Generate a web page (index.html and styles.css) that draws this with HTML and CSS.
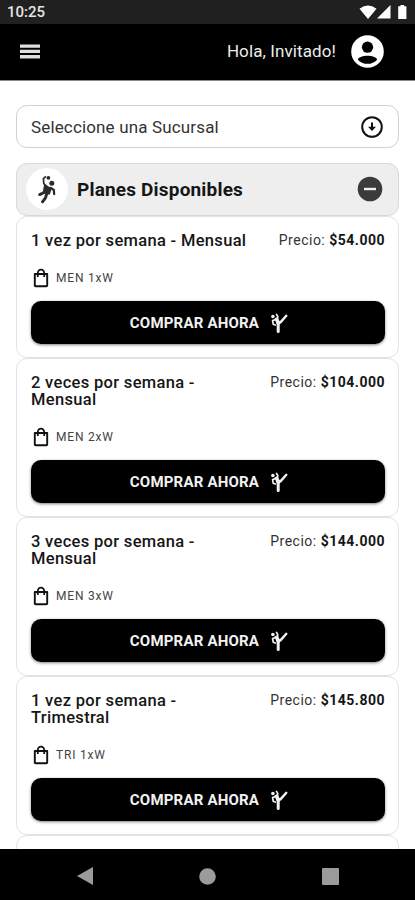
FILE: index.html
```html
<!DOCTYPE html>
<html lang="es">

<head>
  <meta charset="utf-8">
  <title>Planes Disponibles</title>
  <meta name="viewport" content="width=device-width, initial-scale=1">
  <link rel="stylesheet" href="styles.css">
</head>

<body>

  <!-- shared icons -->
  <svg class="sprite">
    <symbol id="icon-bag" viewBox="0 0 16 20">
      <path d="M1.8 6h12.4v11.4q0 .8-.8.8H2.6q-.8 0-.8-.8z" fill="none" stroke="currentColor" stroke-width="1.9" stroke-linejoin="round" />
      <path d="M4.8 9V5.2a3.2 3.6 0 0 1 6.4 0V9" fill="none" stroke="currentColor" stroke-width="1.8" />
    </symbol>
    <symbol id="icon-kick" viewBox="0 0 18 20">
      <circle cx="2.9" cy="3.5" r="1.8" fill="currentColor" />
      <path d="M4.5 5.5l3-1.5 2.5 5-.5 3-3-1z" fill="currentColor" />
      <g fill="none" stroke="currentColor" stroke-linecap="round" stroke-linejoin="round">
        <path d="M6.5 1.4l1.3 2.2-.5 2.4L2.6 7.6l.6 3.6 2.2.8" stroke-width="1.7" />
        <path d="M8.2 9.3l2 .3L16.3 2.8" stroke-width="2.4" />
        <path d="M8.2 9.5v9" stroke-width="3" />
      </g>
    </symbol>
  </svg>

  <div class="status-bar">
    <span>10:25</span>
    <svg width="50" height="17" viewBox="0 0 50 17" fill="#fff">
      <path d="M.5 4.8Q9 -1.8 17.5 4.8L9 15z" />
      <path d="M31.5 1v13.5H18z" />
      <path d="M41.5 1h3.6v1.3h2.3V15h-8.2V2.3h2.3z" />
    </svg>
  </div>

  <header class="navbar">
    <svg class="menu" width="20" height="15" viewBox="0 0 20 15" fill="#dce0dd">
      <path d="M0 .4h20v3.4H0zM0 5.7h20v3.4H0zM0 11h20v3.4H0z" />
    </svg>
    <span class="hello">Hola, Invitado!</span>
    <svg width="33" height="33" viewBox="0 0 33 33">
      <circle cx="16.5" cy="16.5" r="16.3" fill="#fff" />
      <circle cx="16.5" cy="12.2" r="5.6" />
      <path d="M6.8 24.4c2-5 17.4-5 19.4 0-4.6 5.9-14.8 5.9-19.4 0z" />
    </svg>
  </header>

  <main>

    <div class="select">
      <span>Seleccione una Sucursal</span>
      <svg width="22" height="22" viewBox="0 0 22 22">
        <circle cx="11" cy="11" r="9.8" fill="none" stroke="#111" stroke-width="2" />
        <path d="M10 6.5h2v4.3h3L11 15l-4-4.2h3z" fill="#111" />
      </svg>
    </div>

    <div class="plans-header">
      <div class="avatar">
        <svg width="18" height="29" viewBox="0 0 18 29" fill="#2b2b2b">
          <circle cx="10.4" cy="2.8" r="1.9" />
          <circle cx="13.8" cy="8.2" r="2.5" />
          <path d="M6 10l3.4.8 4.5 2.5-2.2 6.4-7-1.7z" />
          <g fill="none" stroke="#2b2b2b" stroke-linecap="round" stroke-linejoin="round">
            <path d="M7.4 1.8L5.4 3.7l.4 5 3.2 3" stroke-width="1.7" />
            <path d="M12.8 12.8l3 2.2.4 4.1" stroke-width="2.2" />
            <path d="M7 17l-5.3 2.6M8.8 18.5l-1.3 4.3-3 4" stroke-width="2.9" />
          </g>
        </svg>
      </div>
      <h1>Planes Disponibles</h1>
      <svg width="26" height="26" viewBox="0 0 26 26">
        <circle cx="13" cy="13" r="12.3" fill="#3b3b3d" />
        <path d="M7 13h12" stroke="#eee" stroke-width="2.4" />
      </svg>
    </div>

    <div class="card">
      <div class="card-top">
        <h2>1 vez por semana - Mensual</h2>
        <span class="price">Precio: <b>$54.000</b></span>
      </div>
      <div class="code"><svg><use href="#icon-bag" /></svg>MEN 1xW</div>
      <button>COMPRAR AHORA <svg><use href="#icon-kick" /></svg></button>
    </div>

    <div class="card">
      <div class="card-top">
        <h2>2 veces por semana - Mensual</h2>
        <span class="price">Precio: <b>$104.000</b></span>
      </div>
      <div class="code"><svg><use href="#icon-bag" /></svg>MEN 2xW</div>
      <button>COMPRAR AHORA <svg><use href="#icon-kick" /></svg></button>
    </div>

    <div class="card">
      <div class="card-top">
        <h2>3 veces por semana - Mensual</h2>
        <span class="price">Precio: <b>$144.000</b></span>
      </div>
      <div class="code"><svg><use href="#icon-bag" /></svg>MEN 3xW</div>
      <button>COMPRAR AHORA <svg><use href="#icon-kick" /></svg></button>
    </div>

    <div class="card">
      <div class="card-top">
        <h2>1 vez por semana - Trimestral</h2>
        <span class="price">Precio: <b>$145.800</b></span>
      </div>
      <div class="code"><svg><use href="#icon-bag" /></svg>TRI 1xW</div>
      <button>COMPRAR AHORA <svg><use href="#icon-kick" /></svg></button>
    </div>

    <div class="card"></div>

  </main>

  <footer class="system-nav">
    <svg width="16" height="18" viewBox="0 0 16 18"><path d="M0 9L16 0v18z" /></svg>
    <svg width="17" height="17" viewBox="0 0 17 17"><circle cx="8.5" cy="8.5" r="8.3" /></svg>
    <svg width="17" height="17" viewBox="0 0 17 17"><rect width="17" height="17" rx="1" /></svg>
  </footer>

</body>

</html>
```
FILE: styles.css
```css
/* ******************** global ******************* */

* {
  box-sizing: border-box;
}

html,
body {
  margin: 0;
  height: 100%;
}

body {
  display: flex;
  flex-direction: column;
  height: 900px;
  overflow: hidden;
  background-color: white;
  color: #161616;
  font-family: Roboto, sans-serif;
}

svg {
  display: block;
  flex: none;
}

.sprite {
  display: none;
}

/* ******************** top bars ******************* */

.status-bar {
  display: flex;
  justify-content: space-between;
  align-items: center;
  flex: none;
  height: 24px;
  padding: 0 6px 0 7px;
  background-color: #202020;
  color: #e4e4e4;
  font-size: 15px;
  font-weight: 500;
}

.navbar {
  display: flex;
  align-items: center;
  flex: none;
  height: 57px;
  padding: 0 31px 2px 20px;
  border-bottom: 1px solid #8c8c8c;
  background-color: black;
  color: #ececec;
}

.hello {
  margin: 0 15px 0 auto;
  font-size: 17px;
  letter-spacing: 0.1px;
}

/* ******************** plans ******************* */

main {
  flex: 1;
  min-height: 0;
  padding: 24px 16px 0;
  overflow: hidden;
}

.select {
  display: flex;
  justify-content: space-between;
  align-items: center;
  height: 43px;
  margin-bottom: 15px;
  padding: 0 15px 0 14px;
  border: 1px solid #d2d2d2;
  border-radius: 11px;
  color: #333;
  font-size: 17px;
  letter-spacing: 0.15px;
}

.plans-header {
  display: flex;
  align-items: center;
  height: 53px;
  padding: 0 15px 1px 9px;
  border: 1px solid #d8d8d8;
  border-radius: 11px;
  background-color: #eee;
}

.avatar {
  display: flex;
  justify-content: center;
  align-items: center;
  width: 42px;
  height: 42px;
  border-radius: 50%;
  background-color: white;
}

h1 {
  flex: 1;
  margin: 0 0 0 9px;
  font-size: 19px;
  font-weight: 700;
  letter-spacing: 0.18px;
}

.card {
  min-height: 142px;
  padding: 15px 13px 13px 14px;
  border: 1px solid #e3e3e3;
  border-radius: 11px;
}

.card-top {
  display: flex;
  justify-content: space-between;
  gap: 16px;
}

h2 {
  margin: 0;
  font-size: 16.5px;
  font-weight: 500;
  line-height: 17px;
  letter-spacing: 0.32px;
}

.price {
  color: #333;
  font-size: 14px;
  line-height: 17px;
  letter-spacing: 0.5px;
  white-space: nowrap;
}

.price b {
  color: #161616;
}

.code {
  display: flex;
  align-items: center;
  height: 20px;
  margin: 19px 0 13px 2px;
  color: #444;
  font-size: 12px;
  letter-spacing: 0.8px;
}

.code svg {
  width: 16px;
  height: 20px;
  margin-right: 7px;
  color: #111;
}

button {
  display: flex;
  justify-content: center;
  align-items: center;
  width: 100%;
  height: 43px;
  padding: 0 0 0 2px;
  border: none;
  border-radius: 10px;
  box-shadow: 0 1px 3px rgba(0, 0, 0, 0.5);
  background-color: black;
  color: #f2f2f2;
  font-family: inherit;
  font-size: 15px;
  font-weight: 700;
  letter-spacing: 0.2px;
}

button svg {
  width: 18px;
  height: 20px;
  margin-left: 11px;
}

/* ******************** system nav ******************* */

.system-nav {
  display: flex;
  justify-content: space-between;
  align-items: center;
  flex: none;
  height: 51px;
  padding: 3px 76px 0 77px;
  background-color: black;
  fill: #9b9b9b;
}
```
